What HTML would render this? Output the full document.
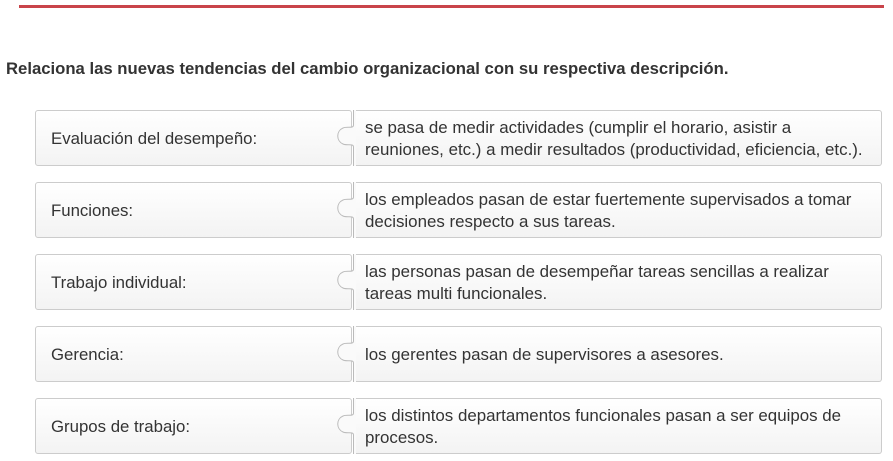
<!DOCTYPE html>
<html><head><style>
body{margin:0;width:893px;height:461px;background:#fff;font-family:"Liberation Sans",sans-serif;overflow:hidden;position:relative}
.bar{position:absolute;left:19px;top:5px;width:865px;height:3px;background:#c9444a}
h1{position:absolute;left:6px;top:59px;margin:0;font-size:16.7px;font-weight:bold;color:#333}
.row{position:absolute;left:35px;width:847px;height:56px}
.l{position:absolute;left:0;top:0;width:317px;border:1px solid #ccc;border-radius:3px;background:linear-gradient(#fff,#f3f3f3);font-size:16.8px;color:#333;display:flex;align-items:center;padding:2px 0 0 15px;box-sizing:border-box;height:56px}
.r{position:absolute;left:318px;top:0;width:529px;height:56px;border:1px solid #ccc;border-left:none;border-radius:0 3px 3px 0;background:linear-gradient(#fff,#f3f3f3);font-size:16.9px;color:#333;display:flex;align-items:center;padding:2px 0 0 12px;box-sizing:border-box;line-height:22px}
svg{position:absolute;left:299px;top:0}
</style></head><body>
<div class="bar"></div>
<h1>Relaciona las nuevas tendencias del cambio organizacional con su respectiva descripción.</h1>
<div class="row" style="top:110px"><div class="l">Evaluación del desempeño:</div><div class="r">se pasa de medir actividades (cumplir el horario, asistir a<br>reuniones, etc.) a medir resultados (productividad, eficiencia, etc.).</div><svg width="22" height="56"><path d="M19.5,0 V15 C19.5,19 13,16 9,18 C2,21 2,31 9,34 C13,36 19.5,33 19.5,37 V56 H22 V0Z" fill="#fafafa"/><path d="M19.5,0 V15 C19.5,19 13,16 9,18 C2,21 2,31 9,34 C13,36 19.5,33 19.5,37 V56" fill="none" stroke="#bbb"/></svg></div>
<div class="row" style="top:182px"><div class="l">Funciones:</div><div class="r">los empleados pasan de estar fuertemente supervisados a tomar<br>decisiones respecto a sus tareas.</div><svg width="22" height="56"><path d="M19.5,0 V15 C19.5,19 13,16 9,18 C2,21 2,31 9,34 C13,36 19.5,33 19.5,37 V56 H22 V0Z" fill="#fafafa"/><path d="M19.5,0 V15 C19.5,19 13,16 9,18 C2,21 2,31 9,34 C13,36 19.5,33 19.5,37 V56" fill="none" stroke="#bbb"/></svg></div>
<div class="row" style="top:254px"><div class="l">Trabajo individual:</div><div class="r">las personas pasan de desempeñar tareas sencillas a realizar<br>tareas multi funcionales.</div><svg width="22" height="56"><path d="M19.5,0 V15 C19.5,19 13,16 9,18 C2,21 2,31 9,34 C13,36 19.5,33 19.5,37 V56 H22 V0Z" fill="#fafafa"/><path d="M19.5,0 V15 C19.5,19 13,16 9,18 C2,21 2,31 9,34 C13,36 19.5,33 19.5,37 V56" fill="none" stroke="#bbb"/></svg></div>
<div class="row" style="top:326px"><div class="l">Gerencia:</div><div class="r">los gerentes pasan de supervisores a asesores.</div><svg width="22" height="56"><path d="M19.5,0 V15 C19.5,19 13,16 9,18 C2,21 2,31 9,34 C13,36 19.5,33 19.5,37 V56 H22 V0Z" fill="#fafafa"/><path d="M19.5,0 V15 C19.5,19 13,16 9,18 C2,21 2,31 9,34 C13,36 19.5,33 19.5,37 V56" fill="none" stroke="#bbb"/></svg></div>
<div class="row" style="top:398px"><div class="l">Grupos de trabajo:</div><div class="r">los distintos departamentos funcionales pasan a ser equipos de<br>procesos.</div><svg width="22" height="56"><path d="M19.5,0 V15 C19.5,19 13,16 9,18 C2,21 2,31 9,34 C13,36 19.5,33 19.5,37 V56 H22 V0Z" fill="#fafafa"/><path d="M19.5,0 V15 C19.5,19 13,16 9,18 C2,21 2,31 9,34 C13,36 19.5,33 19.5,37 V56" fill="none" stroke="#bbb"/></svg></div>
</body></html>
